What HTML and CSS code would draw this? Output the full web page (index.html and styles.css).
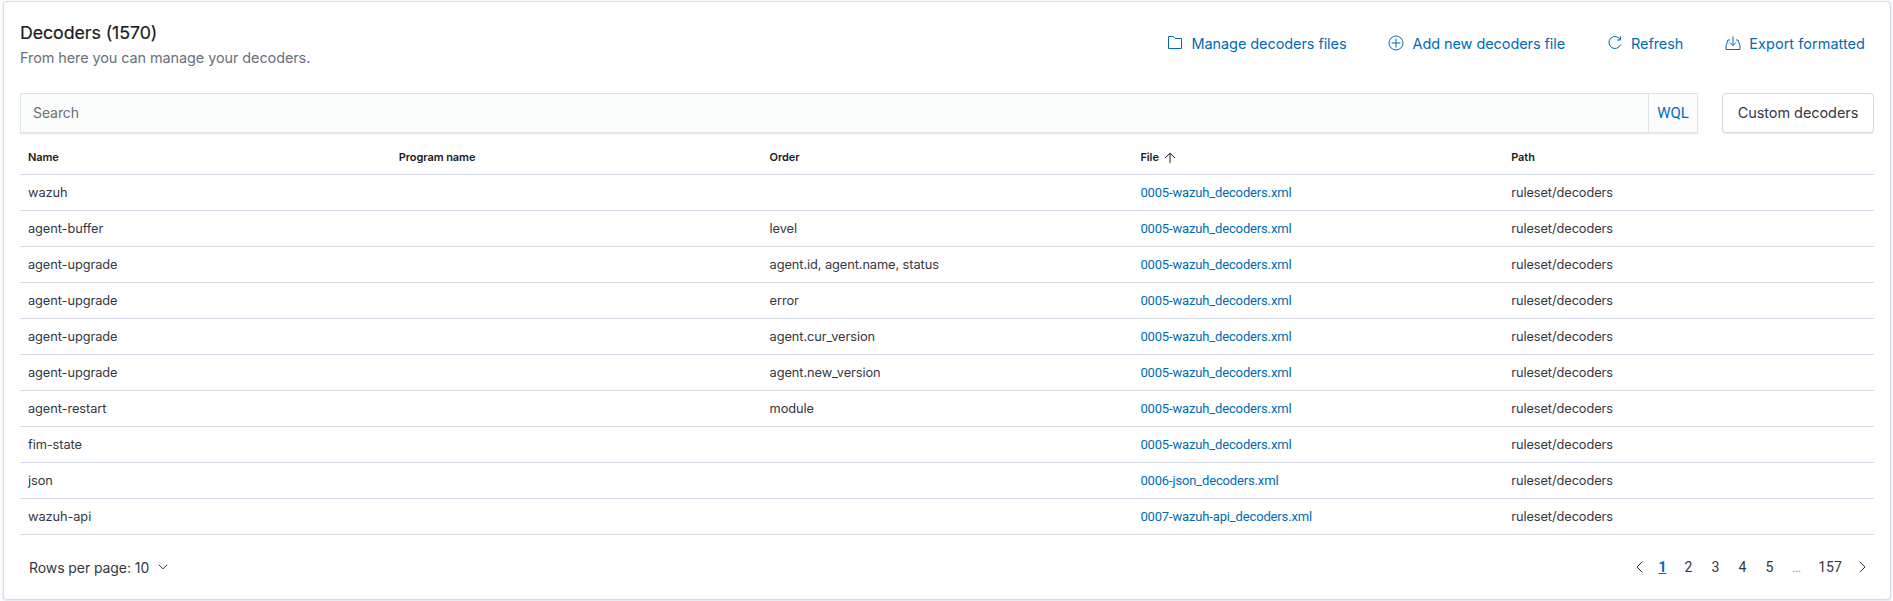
FILE: index.html
```
<!DOCTYPE html>
<html lang="en">
<head>
<meta charset="utf-8">
<title>Decoders</title>
<link rel="stylesheet" href="styles.css">
</head>
<body>
<main class="panel">
  <header class="header">
    <div class="heading">
      <h1 class="title"><span>Decoders (1570)</span></h1>
      <p class="subtitle"><span>From here you can manage your decoders.</span></p>
    </div>
    <nav class="actions">
      <a class="action manage"><svg class="icon" viewBox="0 0 16 16"><path d="M1.500 1.500h5l1.500 2h6.500v10h-13z"/></svg><span>Manage decoders files</span></a>
      <a class="action add"><svg class="icon" viewBox="0 0 16 16"><circle cx="8" cy="8" r="7"/><path d="M8 3.500v9M3.500 8h9"/></svg><span>Add new decoders file</span></a>
      <a class="action refresh"><svg class="icon" viewBox="0 0 16 16"><path d="M10 5h3.500V1.500M13.300 4.800A6 6 0 1 0 13.600 9.500"/></svg><span>Refresh</span></a>
      <a class="action export"><svg class="icon" viewBox="0 0 16 16"><path d="M8 1.500v9M5 7.500l3 3 3-3M5 5H2.900L1 11v3.500h14V11l-1.900-6H11"/></svg><span>Export formatted</span></a>
    </nav>
  </header>
  <section class="searchbar">
    <div class="search"><span class="placeholder">Search</span><span class="wql"><span>WQL</span></span></div>
    <button class="custom"><span>Custom decoders</span></button>
  </section>
  <table class="table">
    <thead><tr><th>Name</th><th>Program name</th><th>Order</th><th>File<svg class="sort" viewBox="0 0 12 12"><path d="M6 11V1.200M1 6l5-4.800L11 6"/></svg></th><th>Path</th></tr></thead>
    <tbody>
      <tr><td>wazuh</td><td></td><td></td><td><a>0005-wazuh_decoders.xml</a></td><td>ruleset/decoders</td></tr>
      <tr><td>agent-buffer</td><td></td><td>level</td><td><a>0005-wazuh_decoders.xml</a></td><td>ruleset/decoders</td></tr>
      <tr><td>agent-upgrade</td><td></td><td>agent.id, agent.name, status</td><td><a>0005-wazuh_decoders.xml</a></td><td>ruleset/decoders</td></tr>
      <tr><td>agent-upgrade</td><td></td><td>error</td><td><a>0005-wazuh_decoders.xml</a></td><td>ruleset/decoders</td></tr>
      <tr><td>agent-upgrade</td><td></td><td>agent.cur_version</td><td><a>0005-wazuh_decoders.xml</a></td><td>ruleset/decoders</td></tr>
      <tr><td>agent-upgrade</td><td></td><td>agent.new_version</td><td><a>0005-wazuh_decoders.xml</a></td><td>ruleset/decoders</td></tr>
      <tr><td>agent-restart</td><td></td><td>module</td><td><a>0005-wazuh_decoders.xml</a></td><td>ruleset/decoders</td></tr>
      <tr><td>fim-state</td><td></td><td></td><td><a>0005-wazuh_decoders.xml</a></td><td>ruleset/decoders</td></tr>
      <tr><td>json</td><td></td><td></td><td><a>0006-json_decoders.xml</a></td><td>ruleset/decoders</td></tr>
      <tr><td>wazuh-api</td><td></td><td></td><td><a>0007-wazuh-api_decoders.xml</a></td><td>ruleset/decoders</td></tr>
    </tbody>
  </table>
  <footer class="footer">
    <div class="rows"><span>Rows per page: 10</span><svg class="chev down" viewBox="0 0 10 6"><path d="M.8.8 5 4.800 9.200.8"/></svg></div>
    <div class="pages">
      <svg class="chev side prev" viewBox="0 0 7 12"><path d="M6.300.7 1 6l5.300 5.300"/></svg>
      <span class="page current">1</span><span class="page">2</span><span class="page">3</span><span class="page">4</span><span class="page">5</span><span class="page dots">…</span><span class="page last">157</span>
      <svg class="chev side next" viewBox="0 0 7 12"><path d="M.7.7 6 6 .7 11.300"/></svg>
    </div>
  </footer>
</main>
</body>
</html>
```
FILE: styles.css
```
* { box-sizing: border-box; }
body {
  margin: 0;
  height: 601px;
  padding: 1px 2px 1px 3px;
  overflow: hidden;
  background: #fafbfd;
  color: #343741;
  font-family: Inter, sans-serif;
  letter-spacing: -.005em;
}
.panel {
  height: 599px;
  padding: 16px;
  background: #fff;
  border: 1px solid #d3dae6;
  border-radius: 4px;
  box-shadow: 0 1px 2px rgba(152, 162, 179, .25);
}
svg { fill: none; stroke: currentColor; flex: none; }
.header { display: flex; justify-content: space-between; height: 75px; }
.title { margin: 3px 0 0; font-size: 17.8px; line-height: 24px; font-weight: 400; color: #1a1c21; -webkit-text-stroke: .2px currentColor; }
.subtitle { margin: 1px 0 0; font-size: 14.45px; line-height: 24px; color: #69707d; }
.actions { display: flex; align-items: center; height: 50px; padding-right: 9px; color: #006bb4; font-size: 14.5px; }
.action { display: flex; align-items: center; white-space: nowrap; }
.manage, .add, .refresh { margin-right: 42px; }
.export { letter-spacing: .03px; }
.icon { width: 16px; height: 16px; margin-right: 8px; }
.searchbar { display: flex; gap: 24px; height: 40px; }
.search {
  flex: 1;
  display: flex;
  align-items: center;
  padding-left: 12px;
  border: 1px solid #dfe3ee;
  background: #fbfcfc;
  box-shadow: 0 1px 1px rgba(152, 162, 179, .25);
  font-size: 14px;
  color: #69707d;
}
.placeholder { padding-bottom: 1px; }
.wql {
  display: flex;
  align-items: center;
  justify-content: center;
  width: 49px;
  height: 38px;
  margin-left: auto;
  border-left: 1px solid #dfe3ee;
  color: #006bb4;
  font-family: Roboto, sans-serif;
  font-size: 15px;
}
.custom {
  width: 152px;
  border: 1px solid #d3dae6;
  border-radius: 4px;
  background: #fff;
  box-shadow: 0 1px 1px rgba(152, 162, 179, .25);
  padding: 0 0 2px;
  font: inherit;
  letter-spacing: inherit;
  font-size: 14.500px;
  color: #343741;
}
.table { width: 1854px; table-layout: fixed; border-collapse: separate; border-spacing: 0; }
.table th, .table td { padding: 0 8px; border-bottom: 1px solid #d3dae6; text-align: left; white-space: nowrap; }
.table th { height: 42px; padding-bottom: 0; padding-top: 6px; font-size: 11px; font-weight: 600; color: #1a1c21; }
.table td { height: 36px; padding-bottom: 1px; font-size: 12.8px; }
.table a { color: #006bb4; font-family: Roboto, sans-serif; font-size: 13px; letter-spacing: -.15px; }
.sort { width: 12px; height: 12px; margin-left: 5px; vertical-align: -3px; }
.footer { display: flex; justify-content: space-between; align-items: center; height: 64px; padding: 0 8px 0 9px; font-size: 14px; }
.rows, .pages { display: flex; align-items: center; }
.down { width: 10px; height: 6px; margin-left: 9px; }
.side { width: 7px; height: 12px; }
.prev { margin-right: 7px; }
.next { margin-left: 9px; }
.page { width: 27px; text-align: center; font-family: Roboto, sans-serif; }
.current { width: 25px; color: #006bb4; font-weight: 700; text-decoration: underline; }
.dots { color: #98a2b3; }
.last { width: 40px; }
```
